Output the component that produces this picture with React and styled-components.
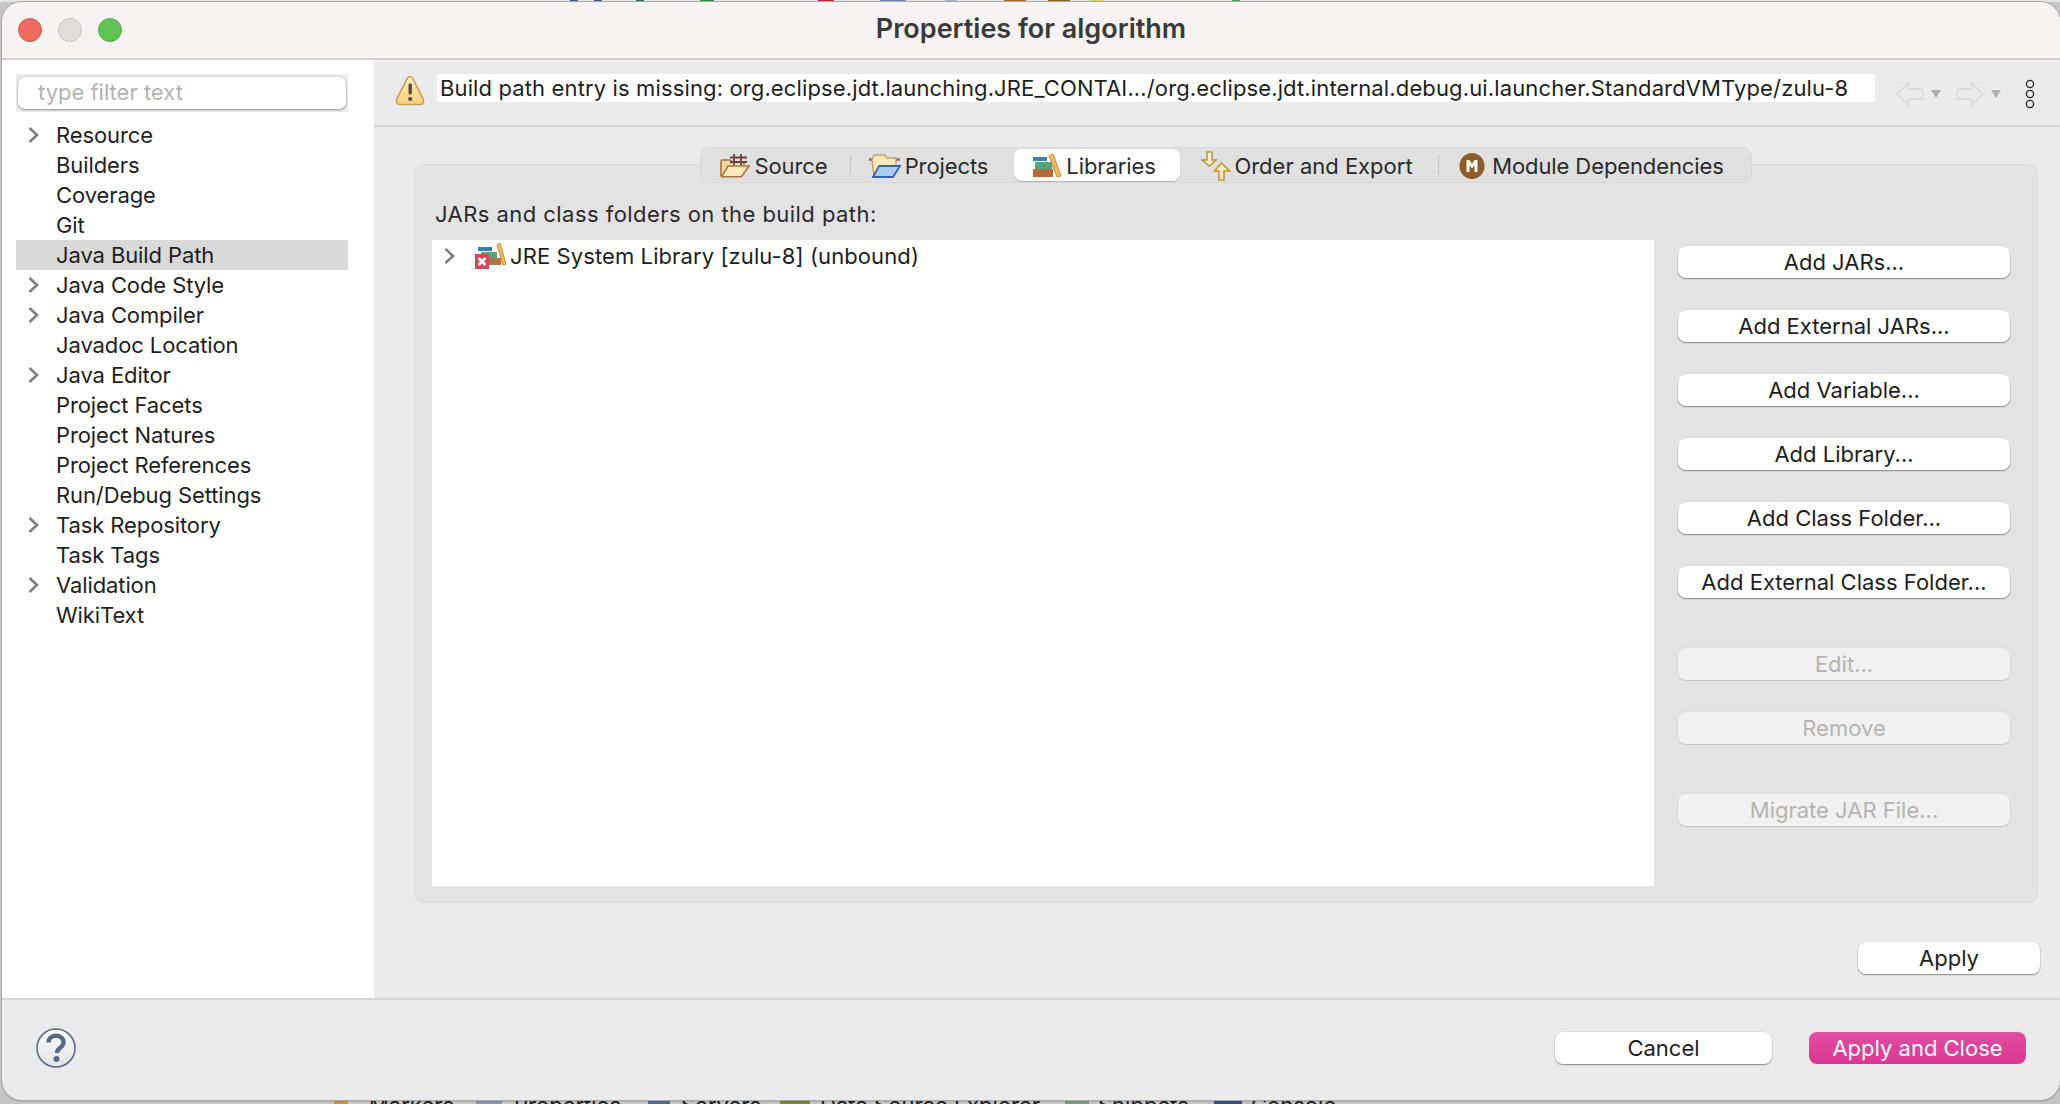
import React from "react";
import styled, { createGlobalStyle } from "styled-components";

const GlobalStyle = createGlobalStyle`
  html, body { margin: 0; padding: 0; background: #d8d8d8; }
  body { width: 2060px; height: 1104px; overflow: hidden; font-family: Inter, "Liberation Sans", sans-serif; }
`;

const Desktop = styled.div`
  position: relative;
  width: 2060px;
  height: 1104px;
  padding: 2px 0 4px 2px;
  box-sizing: border-box;
  overflow: hidden;
  background: #c6c6c6;
`;

/* the eclipse workbench peeking out above and below the dialog */
const BehindTop = styled.div`
  position: absolute;
  top: 0;
  left: 0;
  right: 0;
  height: 2px;
  display: flex;
  background: #e6e6e6;
`;

const Speck = styled.span`
  position: absolute;
  top: 0;
  height: 2px;
  left: ${(p) => p.$x}px;
  width: ${(p) => p.$w}px;
  background: ${(p) => p.$c};
`;

const BehindTabs = styled.div`
  position: absolute;
  top: 1090px;
  left: 0;
  right: 0;
  height: 30px;
  font-size: 22px;
  line-height: 30px;
  color: #1c1c1c;
`;

const BehindTab = styled.span`
  position: absolute;
  top: 0;
  left: ${(p) => p.$x}px;
  white-space: nowrap;
`;

const BehindIcon = styled.span`
  position: absolute;
  top: 10px;
  left: ${(p) => p.$x}px;
  width: ${(p) => p.$w}px;
  height: 6px;
  background: ${(p) => p.$c};
`;

const Window = styled.div`
  position: relative;
  height: 100%;
  display: flex;
  flex-direction: column;
  background: #ebebeb;
  border-radius: 20px;
  overflow: hidden;
  box-shadow: 0 0 0 1px #a9a9a9, 0 1px 2px rgba(0, 0, 0, 0.35);
`;

const TitleBar = styled.div`
  height: 56px;
  flex: none;
  display: flex;
  align-items: center;
  position: relative;
  background: #f6f3f2;
  border-bottom: 2px solid #d2d0cf;
  box-sizing: content-box;
`;

const Lights = styled.div`
  display: flex;
  gap: 16px;
  padding-left: 16px;
`;

const Light = styled.span`
  width: 24px;
  height: 24px;
  border-radius: 50%;
  box-sizing: border-box;
  background: ${(p) => p.$color};
  border: 1px solid ${(p) => p.$edge};
`;

const Title = styled.div`
  position: absolute;
  left: 0;
  right: 0;
  top: 11px;
  line-height: 32px;
  text-align: center;
  font-size: 27px;
  font-weight: 600;
  color: #3a3a3a;
`;

const Body = styled.div`
  flex: 1;
  display: flex;
  min-height: 0;
`;

const Sidebar = styled.div`
  width: 372px;
  flex: none;
  background: #fff;
  padding: 14px 26px 0 14px;
  box-sizing: border-box;
`;

const FilterWrap = styled.div`
  background: #ebebeb;
  padding: 3px 2px;
  height: 38px;
  box-sizing: border-box;
  margin-bottom: 8px;
`;

const FilterInput = styled.div`
  height: 32px;
  background: #fff;
  border-radius: 7px;
  box-shadow: 0 1px 2px rgba(0, 0, 0, 0.35), 0 0 0 1px rgba(0, 0, 0, 0.06);
  padding-left: 20px;
  font-size: 22px;
  line-height: 31px;
  color: #b3b3b3;
`;

const TreeRow = styled.div`
  height: 30px;
  padding-bottom: 1px;
  box-sizing: border-box;
  display: flex;
  align-items: center;
  font-size: 22px;
  letter-spacing: -0.1px;
  color: #1e1e1e;
  background: ${(p) => (p.$selected ? "#d9d9d9" : "transparent")};
`;

const Twisty = styled.span`
  width: 40px;
  flex: none;
  display: flex;
  align-items: center;
  padding-left: 11px;
  box-sizing: border-box;
`;

const Main = styled.div`
  flex: 1;
  display: flex;
  flex-direction: column;
  min-width: 0;
`;

const MessageBar = styled.div`
  height: 67px;
  flex: none;
  display: flex;
  align-items: center;
  padding: 0 0 4px 21px;
  box-sizing: border-box;
  border-bottom: 2px solid #d5d5d5;
`;

const Message = styled.div`
  width: 1438px;
  height: 28px;
  margin-left: 12px;
  padding-left: 3px;
  box-sizing: border-box;
  background: #fff;
  font-size: 22px;
  letter-spacing: 0.13px;
  line-height: 28px;
  color: #1e1e1e;
  white-space: nowrap;
  margin-top: -6px;
`;

const Tools = styled.div`
  display: flex;
  align-items: center;
  margin-left: 20px;
  margin-top: 6px;
`;

const ToolGap = styled.span`
  flex: none;
  width: ${(p) => p.$w}px;
`;

const Content = styled.div`
  flex: 1;
  display: flex;
  flex-direction: column;
  padding: 20px 22px 0 40px;
  min-height: 0;
`;

const TabFolder = styled.div`
  position: relative;
  margin-top: 17px;
  height: 739px;
  flex: none;
  background: #e3e3e3;
  border-radius: 10px;
  box-shadow: inset 0 0 0 1px #dddddd;
  padding: 38px 26px 0 21px;
  box-sizing: border-box;
`;

const Tabs = styled.div`
  position: absolute;
  top: -17px;
  left: 286px;
  width: 1052px;
  height: 36px;
  box-sizing: border-box;
  display: flex;
  align-items: center;
  background: #e0e0e0;
  border-radius: 10px;
  box-shadow: inset 0 0 0 1px #d9d9d9;
`;

const Tab = styled.div`
  height: 32px;
  width: ${(p) => p.$w}px;
  flex: none;
  display: flex;
  align-items: center;
  justify-content: center;
  gap: ${(p) => p.$gap || 4}px;
  padding-right: ${(p) => p.$nudge || 0}px;
  padding-top: 1px;
  box-sizing: border-box;
  font-size: 22px;
  letter-spacing: ${(p) => p.$track || "-0.1px"};
  color: #2a2a2a;
  border-radius: 8px;
  background: ${(p) => (p.$active ? "#fff" : "transparent")};
  box-shadow: ${(p) => (p.$active ? "0 1px 1px rgba(0,0,0,.2)" : "none")};
`;

const TabSep = styled.span`
  width: 1px;
  height: 20px;
  flex: none;
  background: #c4c4c4;
`;

const Label = styled.div`
  font-size: 22px;
  letter-spacing: 0.45px;
  line-height: 24px;
  color: #2a2a2a;
  margin-bottom: 14px;
`;

const Columns = styled.div`
  display: flex;
  gap: 24px;
  margin-left: -3px;
`;

const ListBox = styled.div`
  width: 1222px;
  height: 646px;
  flex: none;
  background: #fff;
  box-sizing: border-box;
  padding-top: 1px;
`;

const ListRow = styled.div`
  height: 30px;
  display: flex;
  align-items: center;
  font-size: 22px;
  letter-spacing: 0.1px;
  color: #1e1e1e;
`;

const ListTwisty = styled.span`
  display: flex;
  padding-left: 11px;
  width: 42px;
  flex: none;
  box-sizing: border-box;
`;

const ListText = styled.span`
  margin-left: 4px;
`;

const Buttons = styled.div`
  width: 332px;
  flex: none;
  display: flex;
  flex-direction: column;
  padding-top: 6px;
`;

const Btn = styled.div`
  height: 32px;
  flex: none;
  display: flex;
  align-items: center;
  justify-content: center;
  box-sizing: border-box;
  border-radius: 8px;
  font-size: 22px;
  width: ${(p) => (p.$w ? `${p.$w}px` : "auto")};
  margin-top: ${(p) => p.$gap || 0}px;
  color: ${(p) => (p.$primary ? "#fff" : p.$disabled ? "#b4b4b4" : "#1e1e1e")};
  background: ${(p) =>
    p.$primary
      ? "linear-gradient(#df4fa2, #da3792)"
      : p.$disabled
      ? "#f1f1f1"
      : "#fff"};
  box-shadow: ${(p) =>
    p.$primary
      ? "none"
      : p.$disabled
      ? "0 1px 1px rgba(0,0,0,.12), 0 0 0 .5px rgba(0,0,0,.04)"
      : "0 1px 1.5px rgba(0,0,0,.4), 0 0 0 .5px rgba(0,0,0,.06)"};
`;

const ApplyRow = styled.div`
  display: flex;
  justify-content: flex-end;
  padding: 39px 0 0 0;
  margin-right: -2px;
`;

const Footer = styled.div`
  height: 102px;
  flex: none;
  border-top: 2px solid #d5d5d5;
  display: flex;
  align-items: flex-start;
  justify-content: space-between;
  padding: 32px 34px 0 34px;
  box-sizing: border-box;
`;

const HelpWrap = styled.div`
  margin-top: -4px;
`;

const FooterButtons = styled.div`
  display: flex;
  gap: 37px;
`;

const Chevron = () => (
  <svg width="13" height="18" viewBox="0 0 13 18">
    <path d="M2.5 2 L10 9 L2.5 16" fill="none" stroke="#7f7f7f" strokeWidth="2.6" />
  </svg>
);

const WarningIcon = () => (
  <svg width="30" height="32" viewBox="0 0 30 32">
    <defs>
      <linearGradient id="warn" x1="0" y1="0" x2="0" y2="1">
        <stop offset="0" stopColor="#fdf0bd" />
        <stop offset="1" stopColor="#f8cf7c" />
      </linearGradient>
    </defs>
    <path d="M15 1.5 C13.6 1.5 12.8 2.5 12 4 L2 23.5 C0.5 27 2 29.5 5 29.5 L25 29.5 C28 29.5 29.5 27 28 23.5 L18 4 C17.2 2.5 16.4 1.5 15 1.5 Z" fill="url(#warn)" stroke="#c79a5c" strokeWidth="1.6" />
    <rect x="13.5" y="8.5" width="3.4" height="11" rx="1.4" fill="#5e4a2c" />
    <circle cx="15.2" cy="24" r="2.1" fill="#5e4a2c" />
  </svg>
);

const NavArrow = ({ flip }) => (
  <svg width="30" height="26" viewBox="0 0 30 26" style={flip ? { transform: "scaleX(-1)" } : undefined}>
    <path d="M13.5 2 L2 13 L13.5 24 L13.5 18 L27 18 Q28 18 28 17 L28 9 Q28 8 27 8 L13.5 8 Z" fill="none" stroke="#dcdcdc" strokeWidth="2" />
  </svg>
);

const DropMark = () => (
  <svg width="10" height="8" viewBox="0 0 10 8">
    <path d="M0 0 H10 L5 8 Z" fill="#b0b0b0" />
  </svg>
);

const MoreDots = () => (
  <svg width="10" height="30" viewBox="0 0 10 30">
    <circle cx="5" cy="5" r="3.6" fill="none" stroke="#222" strokeWidth="1.3" />
    <circle cx="5" cy="15" r="3.6" fill="none" stroke="#222" strokeWidth="1.3" />
    <circle cx="5" cy="25" r="3.6" fill="none" stroke="#222" strokeWidth="1.3" />
  </svg>
);

const SourceIcon = () => (
  <svg width="30" height="24" viewBox="0 0 30 24">
    <path d="M1 22 V7.5 Q1 6 2.5 6 H10 L12 8 H24 V11" fill="#f3d9a0" stroke="#a9753a" strokeWidth="1.6" />
    <path d="M1.5 22.8 L8 12 H29 L21.5 22.8 Z" fill="#fbe9bd" stroke="#a9753a" strokeWidth="1.6" />
    <path d="M14 0 V11 M21 0 V11 M10 3.5 H27 M10 8 H27" stroke="#6d3f3f" strokeWidth="1.8" fill="none" />
  </svg>
);

const ProjectsIcon = () => (
  <svg width="32" height="24" viewBox="0 0 32 24">
    <path d="M0 5.5 H31" stroke="#77706e" strokeWidth="2.4" />
    <path d="M5 22 L3 6 Q4 1 7 1 H16 L18 4 H27 V13" fill="#fbeab9" stroke="#c4a266" strokeWidth="1.4" />
    <path d="M4 23 L10 12 H31 L24 23 Z" fill="#a9d0f3" stroke="#3f5fb4" strokeWidth="1.8" />
  </svg>
);

const BooksIcon = () => (
  <svg width="30" height="25" viewBox="0 0 30 25">
    <rect x="1" y="16" width="20" height="8" fill="#b26a3e" />
    <rect x="3" y="9" width="17" height="7" fill="#5ba27a" />
    <rect x="1" y="4" width="14" height="4" fill="#3d7cb5" />
    <path d="M17 3 L21 1 L29 23 L25 24 Z" fill="#eebd5f" stroke="#c08a32" strokeWidth="1" />
  </svg>
);

const OrderIcon = () => (
  <svg width="30" height="30" viewBox="0 0 30 30">
    <path d="M6 1 H11 V9 H15 L8.5 15 L1 9 H6 Z" fill="#fdf2c8" stroke="#b9963f" strokeWidth="1.5" />
    <path d="M18 29 H23 V20 H28.5 L20.5 12 L13.5 20 H18 Z" fill="#fdf2c8" stroke="#c9962a" strokeWidth="1.6" />
  </svg>
);

const ModuleIcon = () => (
  <svg width="26" height="26" viewBox="0 0 26 26">
    <ellipse cx="13" cy="13" rx="12.5" ry="13" fill="#8e5d27" />
    <path d="M7.5 19 V7 H10.5 L13 11 L15.5 7 H18.5 V19 H15.5 V12 L13 15.5 L10.5 12 V19 Z" fill="#fff" />
  </svg>
);

const JreIcon = () => (
  <svg width="32" height="28" viewBox="0 0 32 28">
    <rect x="9" y="16" width="18" height="7" fill="#b0744a" />
    <rect x="7" y="10" width="16" height="6" fill="#5ba27a" />
    <rect x="4" y="5" width="14" height="4" fill="#3d7cb5" />
    <path d="M23 3 L26 1 L32 22 L29 23 Z" fill="#eebd5f" stroke="#c08a32" strokeWidth="1" />
    <rect x="1" y="12" width="14" height="15" fill="#cf4a59" />
    <path d="M4.5 16 L11.5 23 M11.5 16 L4.5 23" stroke="#fff" strokeWidth="2.6" />
  </svg>
);

const HelpIcon = () => (
  <svg width="40" height="40" viewBox="0 0 40 40">
    <defs>
      <linearGradient id="help" x1="0" y1="0" x2="0" y2="1">
        <stop offset="0" stopColor="#fafafa" />
        <stop offset="1" stopColor="#e4e4e4" />
      </linearGradient>
    </defs>
    <circle cx="20" cy="20" r="19" fill="url(#help)" stroke="#5a6a88" strokeWidth="1.6" />
    <path d="M12.5 14.5 C12.5 5.5 27.5 5.5 27.5 14.5 C27.5 20 21 19.5 21 25" fill="none" stroke="#586987" strokeWidth="4.4" />
    <circle cx="20.5" cy="31" r="3" fill="#586987" />
  </svg>
);

const treeItems = [
  ["Resource", true],
  ["Builders"],
  ["Coverage"],
  ["Git"],
  ["Java Build Path", false, true],
  ["Java Code Style", true],
  ["Java Compiler", true],
  ["Javadoc Location"],
  ["Java Editor", true],
  ["Project Facets"],
  ["Project Natures"],
  ["Project References"],
  ["Run/Debug Settings"],
  ["Task Repository", true],
  ["Task Tags"],
  ["Validation", true],
  ["WikiText"],
];

const topSpecks = [
  [570, 8, "#3d5a8c"], [594, 8, "#3d5a8c"], [636, 8, "#2f6b4a"], [700, 14, "#2f8a3c"],
  [818, 16, "#b3261e"], [880, 26, "#6f86b5"], [945, 12, "#9fb3d3"], [1004, 22, "#9a6a2c"],
  [1048, 22, "#8c5e24"], [1090, 14, "#e6c878"], [1232, 8, "#3f9b4a"],
];

const behindTabs = [
  [369, "Markers"],
  [514, "Properties"],
  [681, "Servers"],
  [820, "Data Source Explorer"],
  [1098, "Snippets"],
  [1251, "Console"],
];

const behindIcons = [
  [334, 14, "#c99a3c"], [476, 26, "#8a97ad"], [648, 22, "#4e6f96"],
  [780, 30, "#7a8a3a"], [1065, 24, "#7f9a86"], [1214, 28, "#3d4f80"],
];

export default function App() {
  return (
    <Desktop>
      <GlobalStyle />
      <BehindTop>
        {topSpecks.map(([x, w, c]) => (
          <Speck key={x} $x={x} $w={w} $c={c} />
        ))}
      </BehindTop>
      <BehindTabs>
        {behindIcons.map(([x, w, c]) => (
          <BehindIcon key={x} $x={x} $w={w} $c={c} />
        ))}
        {behindTabs.map(([x, name]) => (
          <BehindTab key={name} $x={x}>{name}</BehindTab>
        ))}
      </BehindTabs>
      <Window>
        <TitleBar>
          <Lights>
            <Light $color="#ee6a5f" $edge="#d9574d" />
            <Light $color="#dfdcdb" $edge="#c6c3c2" />
            <Light $color="#60c554" $edge="#4fae44" />
          </Lights>
          <Title>Properties for algorithm</Title>
        </TitleBar>
        <Body>
          <Sidebar>
            <FilterWrap>
              <FilterInput>type filter text</FilterInput>
            </FilterWrap>
            {treeItems.map(([name, expandable, selected]) => (
              <TreeRow key={name} $selected={selected}>
                <Twisty>{expandable && <Chevron />}</Twisty>
                {name}
              </TreeRow>
            ))}
          </Sidebar>
          <Main>
            <MessageBar>
              <WarningIcon />
              <Message>
                Build path entry is missing: org.eclipse.jdt.launching.JRE_CONTAI.../org.eclipse.jdt.internal.debug.ui.launcher.StandardVMType/zulu-8
              </Message>
              <Tools>
                <NavArrow />
                <ToolGap $w={6} />
                <DropMark />
                <ToolGap $w={14} />
                <NavArrow flip />
                <ToolGap $w={6} />
                <DropMark />
                <ToolGap $w={24} />
                <MoreDots />
              </Tools>
            </MessageBar>
            <Content>
              <TabFolder>
                <Tabs>
                  <Tab $w={150} $nudge={2}><SourceIcon />Source</Tab>
                  <TabSep />
                  <Tab $w={163} $nudge={8}><ProjectsIcon />Projects</Tab>
                  <Tab $w={166} $nudge={6} $active><BooksIcon />Libraries</Tab>
                  <Tab $w={258} $nudge={4} $gap={3} $track="0px"><OrderIcon />Order and Export</Tab>
                  <TabSep />
                  <Tab $w={312} $nudge={7} $gap={7}><ModuleIcon />Module Dependencies</Tab>
                </Tabs>
                <Label>JARs and class folders on the build path:</Label>
                <Columns>
                  <ListBox>
                    <ListRow>
                      <ListTwisty><Chevron /></ListTwisty>
                      <JreIcon />
                      <ListText>JRE System Library [zulu-8] (unbound)</ListText>
                    </ListRow>
                  </ListBox>
                  <Buttons>
                    <Btn>Add JARs...</Btn>
                    <Btn $gap={32}>Add External JARs...</Btn>
                    <Btn $gap={32}>Add Variable...</Btn>
                    <Btn $gap={32}>Add Library...</Btn>
                    <Btn $gap={32}>Add Class Folder...</Btn>
                    <Btn $gap={32}>Add External Class Folder...</Btn>
                    <Btn $gap={50} $disabled>Edit...</Btn>
                    <Btn $gap={32} $disabled>Remove</Btn>
                    <Btn $gap={50} $disabled>Migrate JAR File...</Btn>
                  </Buttons>
                </Columns>
              </TabFolder>
              <ApplyRow>
                <Btn $w={182}>Apply</Btn>
              </ApplyRow>
            </Content>
          </Main>
        </Body>
        <Footer>
          <HelpWrap><HelpIcon /></HelpWrap>
          <FooterButtons>
            <Btn $w={217}>Cancel</Btn>
            <Btn $w={217} $primary>Apply and Close</Btn>
          </FooterButtons>
        </Footer>
      </Window>
    </Desktop>
  );
}
